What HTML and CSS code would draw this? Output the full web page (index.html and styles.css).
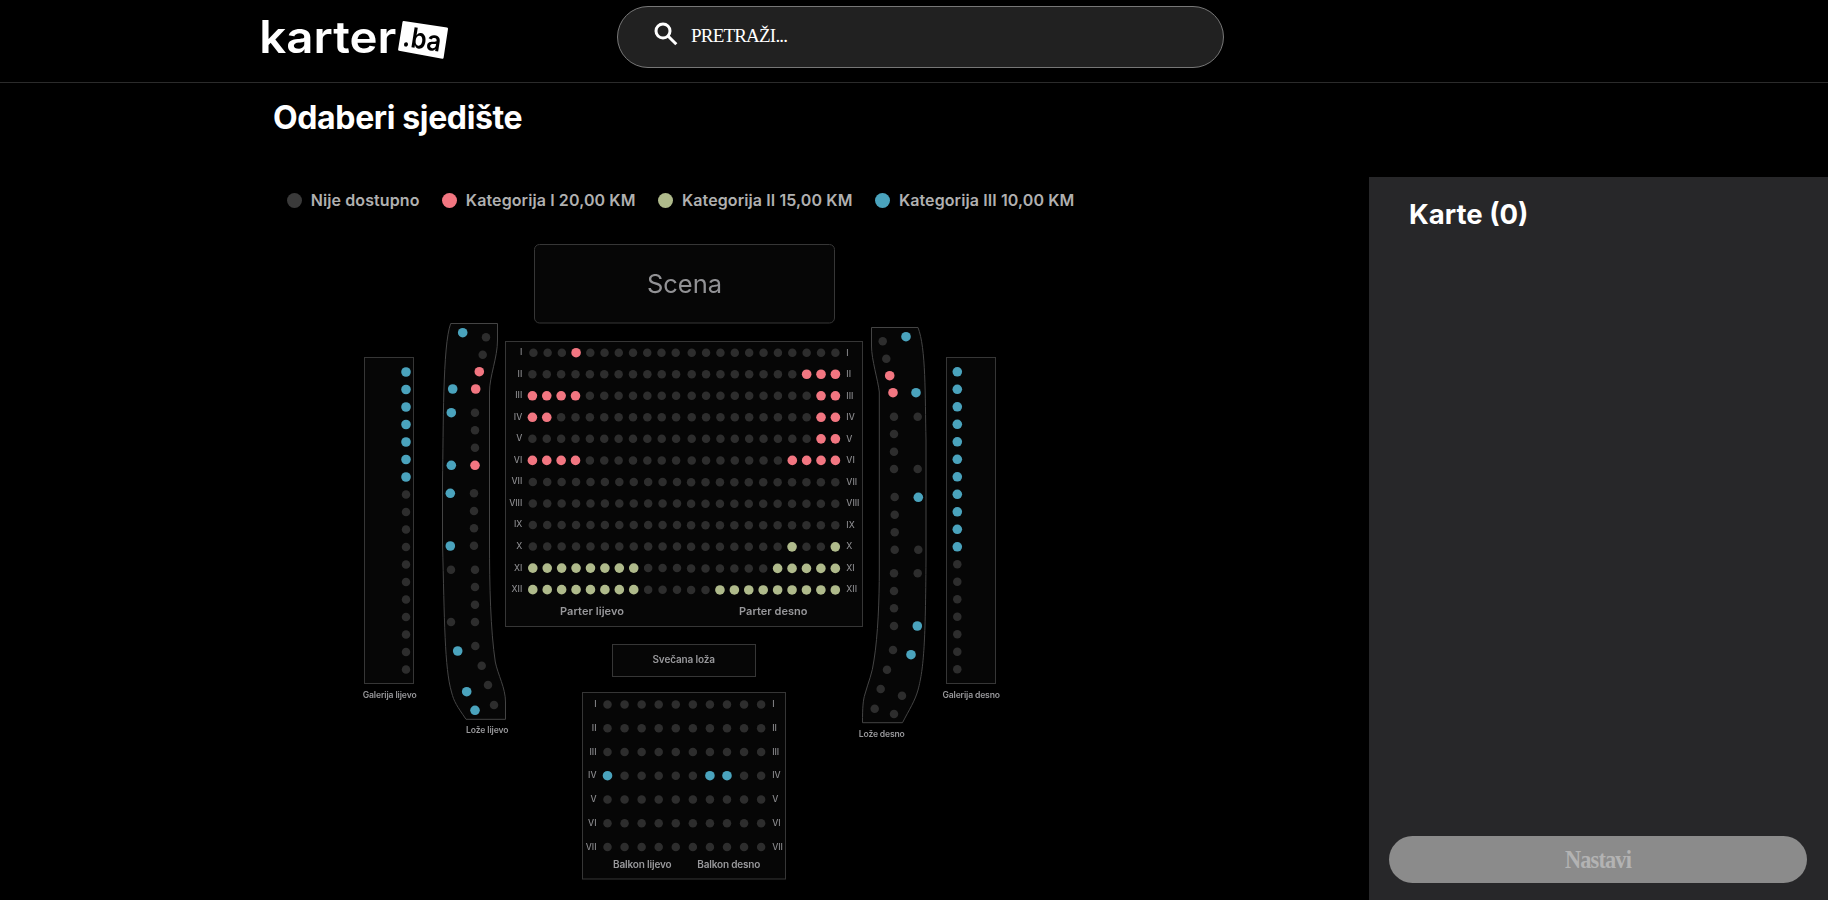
FILE: index.html
```html
<!DOCTYPE html>
<html lang="bs">
<head>
<meta charset="utf-8">
<title>Odaberi sjedište</title>
<link rel="stylesheet" href="styles.css">
</head>
<body>
<header class="header">
  <svg class="logo" width="200" height="56" viewBox="250 10 200 56">
    <text class="logo-word" x="259.300" y="53" textLength="137" lengthAdjust="spacingAndGlyphs">karter</text>
    <path class="logo-tag" d="M403.7 21 447 27.6Q448.200 27.800 448 29L443.600 57.800Q443.400 58.900 442.300 58.700L399 50.800Q397.900 50.600 398.100 49.500L402.500 22Q402.700 20.900 403.700 21Z"/>
    <text class="logo-ba" transform="translate(401.800 45.800) rotate(9)" textLength="38.500" lengthAdjust="spacingAndGlyphs">.ba</text>
  </svg>
  <div class="search">
    <svg class="search-icon" width="24" height="24" viewBox="0 0 24 24"><circle cx="9" cy="9" r="7"/><path d="M14 14 22.300 22.300"/></svg>
    <span class="search-text">PRETRAŽI...</span>
  </div>
</header>
<main class="main">
  <section class="seating">
    <h1 class="title">Odaberi sjedište</h1>
    <ul class="legend">
      <li class="legend-item"><i class="dot dot-off"></i>Nije dostupno</li>
      <li class="legend-item"><i class="dot dot-one"></i>Kategorija I 20,00 KM</li>
      <li class="legend-item"><i class="dot dot-two"></i>Kategorija II 15,00 KM</li>
      <li class="legend-item"><i class="dot dot-three"></i>Kategorija III 10,00 KM</li>
    </ul>
    <svg class="map" id="map" width="660" height="660" viewBox="350 230 660 660">
      <rect class="zone" x="534.500" y="244.500" width="300" height="78.500" rx="5"/>
      <rect class="zone" x="364.500" y="357.500" width="49" height="326"/>
      <rect class="zone" x="946.500" y="357.500" width="49" height="326"/>
      <rect class="zone" x="505.500" y="341.500" width="357" height="285"/>
      <rect class="zone" x="612.500" y="644.500" width="143" height="32"/>
      <rect class="zone" x="582.500" y="692.500" width="203" height="186.500"/>
      <path class="zone curved" d="M450.700 323.500H497.500V340C497.500 358 489.500 376 489.500 392V543C489.500 585 490.500 630 495.300 662C498 675 505.500 688 505.500 702V719.300H466C457 706 454 702 451.500 692C444.500 668 444.500 620 442.500 543V480C443.500 430 442.500 345 450.700 323.500Z"/>
      <path class="zone curved" d="M871.500 327.500H918C926 348 925 395 926 440V560C925.500 640 924 668 918 690C915 701 909 710 902.500 722.700H862.500C862.500 708 863 700 865 694C868 683 872.500 673 874 660C878 635 879.300 600 879.300 570V392C878 380 871.500 360 871.500 346Z"/>
      <text class="stage" x="647" y="292.500" textLength="75">Scena</text>
      <text class="zone-name" x="560" y="615.200" textLength="64">Parter lijevo</text>
      <text class="zone-name" x="739" y="614.800" textLength="68.500">Parter desno</text>
      <text class="zone-name mid" x="652.500" y="663.300" textLength="62.500">Svečana loža</text>
      <text class="zone-name mid" x="613" y="868.300" textLength="58.700">Balkon lijevo</text>
      <text class="zone-name mid" x="697.300" y="868.300" textLength="63">Balkon desno</text>
      <text class="zone-name small" x="362.700" y="697.600" textLength="54">Galerija lijevo</text>
      <text class="zone-name small" x="942.500" y="697.600" textLength="57.500">Galerija desno</text>
      <text class="zone-name small" x="466" y="733.200" textLength="42.500">Lože lijevo</text>
      <text class="zone-name small" x="858.800" y="736.900" textLength="46">Lože desno</text>
    </svg>
  </section>
  <aside class="cart">
    <h2 class="cart-title">Karte (0)</h2>
    <button class="next" disabled><svg class="next-label" width="90" height="46" viewBox="0 0 90 46"><text x="12" y="31" textLength="66" lengthAdjust="spacingAndGlyphs">Nastavi</text></svg></button>
  </aside>
</main>
<script src="seats.js"></script>
</body>
</html>
```
FILE: styles.css
```css
* { box-sizing: border-box; }
html, body { margin: 0; height: 100%; }
body {
  background: #000;
  color: #fff;
  font-family: Inter, "Liberation Sans", sans-serif;
  overflow: hidden;
  display: flex;
  flex-direction: column;
}
.header {
  height: 83px;
  flex: none;
  display: flex;
  align-items: flex-start;
  border-bottom: 1px solid #2b2b2b;
  padding: 6px 0 0 250px;
}
.logo { margin-top: 4px; will-change: transform; }
.logo-word { font-size: 44.5px; font-weight: 600; fill: #fff; }
.logo-tag { fill: #fff; }
.logo-ba { font-size: 28px; font-weight: 600; fill: #000; }
.search {
  margin-left: 167px;
  width: 607px;
  height: 62px;
  border: 1px solid #777;
  border-radius: 31px;
  background: #212121;
  display: flex;
  align-items: flex-start;
  padding: 15px 0 0 36px;
}
.search-icon { fill: none; stroke: #fff; stroke-width: 3; }
.search-text {
  margin-left: 13px;
  font: 19px/28px "Liberation Serif", serif;
  letter-spacing: -0.8px;
}
.main { flex: 1; display: flex; min-height: 0; }
.seating { width: 1369px; }
.title {
  margin: 15px 0 0 273px;
  font-size: 32px;
  line-height: 39px;
  font-weight: 700;
  letter-spacing: -0.36px;
}
.legend {
  list-style: none;
  margin: 52px 0 0 287px;
  padding: 0;
  display: flex;
  gap: 22.7px;
  height: 22px;
  line-height: 22px;
  font-size: 16px;
  font-weight: 600;
  letter-spacing: 0.1px;
  color: #b0b0b0;
}
.legend-item { display: flex; align-items: center; gap: 8.7px; white-space: nowrap; }
.dot { width: 15px; height: 15px; border-radius: 50%; }
.dot-off { background: #3a3a3a; }
.dot-one { background: #f27681; }
.dot-two { background: #afba8b; }
.dot-three { background: #4aa3bd; }
.map { display: block; margin: 19px 0 0 350px; will-change: transform; }
.zone { fill: #060606; stroke: #363636; stroke-width: 1; }
.curved { stroke: #444; }
.stage { font-size: 25.5px; fill: #929295; }
.zone-name { font-size: 11px; font-weight: 600; fill: #98989b; }
.mid { font-size: 10px; }
.small { font-size: 8.6px; }
.row-label { font-size: 8.6px; font-weight: 500; fill: #8a8a8d; }
.row-label-left { text-anchor: end; }
.seat { fill: #2d2d2d; }
.seat-one { fill: #f27681; }
.seat-two { fill: #afba8b; }
.seat-three { fill: #4aa3bd; }
.cart {
  flex: 1;
  margin-top: 94px;
  background: #272729;
  display: flex;
  flex-direction: column;
  padding: 20px 21px 17px 20px;
}
.cart-title {
  margin: 0 0 0 20px;
  font-size: 27.5px;
  line-height: 34px;
  font-weight: 700;
}
.next {
  margin-top: auto;
  height: 47px;
  border: 0;
  border-radius: 24px;
  background: #8b8b8b;
  padding: 0;
  display: flex;
  align-items: center;
  justify-content: center;
}
.next-label {
  fill: #b3b3b3;
  font: bold 26px "Liberation Serif", serif;
  letter-spacing: -1px;
}
```
FILE: seats.js
```js
const map = document.getElementById('map');
const NS = 'http://www.w3.org/2000/svg';
const ROMAN = ['I', 'II', 'III', 'IV', 'V', 'VI', 'VII', 'VIII', 'IX', 'X', 'XI', 'XII'];
const CLASSES = ['seat', 'seat seat-one', 'seat seat-two', 'seat seat-three'];

function seat(x, y, category) {
  const c = document.createElementNS(NS, 'circle');
  c.setAttribute('cx', x);
  c.setAttribute('cy', y);
  c.setAttribute('r', category ? 4.8 : 4.25);
  c.setAttribute('class', CLASSES[category]);
  map.appendChild(c);
}

function label(x, y, text, left) {
  const t = document.createElementNS(NS, 'text');
  t.setAttribute('x', x);
  t.setAttribute('y', y);
  t.setAttribute('class', 'row-label' + (left ? ' row-label-left' : ''));
  t.textContent = text;
  map.appendChild(t);
}

// Parter: one digit per seat, left block then right block
const parter = [
  ['00010000000', '00000000000'],
  ['00000000000', '00000000111'],
  ['11110000000', '00000000011'],
  ['11000000000', '00000000011'],
  ['00000000000', '00000000011'],
  ['11110000000', '00000001111'],
  ['00000000000', '00000000000'],
  ['00000000000', '00000000000'],
  ['00000000000', '00000000000'],
  ['00000000000', '00000002002'],
  ['22222222000', '00000022222'],
  ['22222222000', '00222222222']
];
parter.forEach(([left, right], r) => {
  const y = 352.7 + r * 21.54;
  const step = r > 5 ? 14.42 : 14.37;
  const x0 = r === 0 ? 533.4 : r > 5 ? 532.8 : 532.4;
  const x1 = r > 5 ? 691.1 : 691.7;
  [...left].forEach((c, i) => seat(x0 + i * (r === 0 ? 14.23 : step), y, +c));
  [...right].forEach((c, i) => seat(x1 + i * step, y + (r > 5 ? 0.3 : 0), +c));
  label(522.3, y + 2.4, ROMAN[r], true);
  label(846.3, y + 2.8, ROMAN[r], false);
});

// Balkon
for (let r = 0; r < 7; r++) {
  const y = 704.4 + r * 23.77;
  for (let i = 0; i < 10; i++) {
    seat(607.5 + i * 17.07, y, r === 3 && [0, 6, 7].includes(i) ? 3 : 0);
  }
  label(596.5, y + 2.7, ROMAN[r], true);
  label(772.2, y + 2.7, ROMAN[r], false);
}

// Galerije
for (let i = 0; i < 18; i++) {
  seat(406, 372 + i * 17.5, i < 7 ? 3 : 0);
  seat(957.3, 371.8 + i * 17.5, i < 11 ? 3 : 0);
}

// Lože
[
  [462.7, 332.7, 3], [486, 337.3, 0], [482.7, 354.7, 0], [479.3, 371.7, 1],
  [452.7, 389, 3], [475.7, 389, 1], [451.3, 412.7, 3], [475, 412.7, 0],
  [475, 430.3, 0], [475, 447.7, 0], [451.3, 465.3, 3], [475, 465.3, 1],
  [450.3, 493.3, 3], [474, 493.3, 0], [474, 511, 0], [474, 528.3, 0],
  [474, 545.7, 0], [450.3, 546, 3], [451, 569.7, 0], [475, 569.7, 0],
  [475, 587, 0], [475, 604.7, 0], [475, 622, 0], [451, 622, 0],
  [457.7, 651, 3], [475.3, 646, 0], [481.7, 665.7, 0], [488, 685, 0],
  [494, 705, 0], [466.7, 691.7, 3], [475, 710.3, 3],
  [882.7, 341.3, 0], [906, 336.7, 3], [886.3, 358.7, 0], [889.7, 375.7, 1],
  [893, 392.7, 1], [916, 392.7, 3], [894, 416.7, 0], [917.7, 416.7, 0],
  [894, 434, 0], [894, 451.7, 0], [894, 469, 0], [917.7, 469, 0],
  [894.7, 497, 0], [918.3, 497.3, 3], [894.7, 514.7, 0], [894.7, 532.3, 0],
  [894.7, 549.7, 0], [918.3, 549.7, 0], [894, 573.3, 0], [917.7, 573.3, 0],
  [894, 591, 0], [894, 608.3, 0], [894, 626, 0], [917.3, 626, 3],
  [893, 650, 0], [911, 654.7, 3], [887, 669.7, 0], [880.7, 689, 0],
  [902, 695.7, 0], [874.7, 708.7, 0], [894, 714, 0]
].forEach(s => seat(...s));
```
